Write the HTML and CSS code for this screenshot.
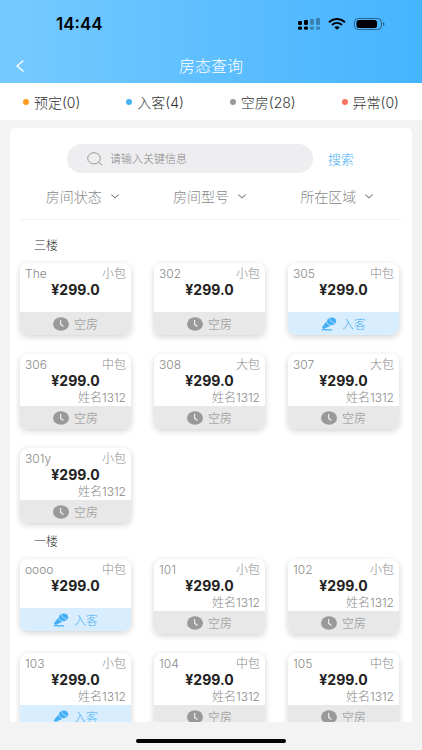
FILE: index.html
```html
<!DOCTYPE html>
<html lang="zh-CN">
<head>
  <meta charset="UTF-8" />
  <meta name="viewport" content="width=device-width, initial-scale=1.0" />
  <title>房态查询</title>
  <link rel="stylesheet" href="styles.css">
</head>
<body>

  <!-- 图标 -->
  <svg class="sprite" aria-hidden="true">
    <symbol id="icon-clock" viewBox="0 0 16 14">
      <ellipse cx="8" cy="7" rx="8" ry="6.7" fill="#999" />
      <path d="M7.6 3.400v4l2.600 1.800" fill="none" stroke="#e8e8e8" stroke-width="1.300" stroke-linecap="round" stroke-linejoin="round" />
    </symbol>
    <symbol id="icon-mic" viewBox="0 0 16 14">
      <ellipse cx="10.600" cy="4.300" rx="4.600" ry="3.900" fill="#42aef5" />
      <path d="M5.300 4.800c.6 2 2 3.200 4.200 3.900L3.600 11.500c-.8.4-1.700.2-2.200-.3-.4-.5-.3-1 .1-1.600z" fill="#42aef5" />
      <path d="M1.200 13c1.600-1.200 2.700-.2 4.300-.2h5.200" fill="none" stroke="#42aef5" stroke-width="1.200" stroke-linecap="round" />
      <path d="M8.200.9c.6 2.700 2.700 4.800 6.200 5.600" fill="none" stroke="#d8edfd" stroke-width=".7" />
    </symbol>
    <symbol id="icon-down" viewBox="0 0 8 5">
      <path d="M.7.9L4 3.900 7.300.9" fill="none" stroke="#888" stroke-width="1.100" stroke-linecap="round" stroke-linejoin="round" />
    </symbol>
  </svg>

  <header class="header">
    <div class="status-bar">
      <span class="time">14:44</span>
      <div class="status-icons">
        <svg width="22" height="12" viewBox="0 0 22 12">
          <rect x="0" y="3" width="4" height="4" rx="1.200" />
          <rect x="6" y="2" width="4" height="5" rx="1.200" />
          <rect x="0" y="8.500" width="4" height="3.200" rx="1.200" />
          <rect x="6" y="8.500" width="4" height="3.200" rx="1.200" />
          <g opacity=".3">
            <rect x="12" y="1" width="4" height="6" rx="1.200" />
            <rect x="18" y="0" width="4" height="7" rx="1.200" />
            <rect x="12" y="8.500" width="4" height="3.200" rx="1.200" />
            <rect x="18" y="8.500" width="4" height="3.200" rx="1.200" />
          </g>
        </svg>
        <svg width="18" height="12" viewBox="0 0 18 12">
          <path d="M1 4.200C5.500-.1 12.500-.1 17 4.200M4 7c2.900-2.600 7.100-2.600 10 0" fill="none" stroke="#000" stroke-width="2" />
          <path d="M6.200 9.200c1.600-1.300 4-1.300 5.600 0L9 11.700z" />
        </svg>
        <svg width="31" height="12" viewBox="0 0 31 12">
          <rect x=".5" y=".5" width="27" height="11" rx="3.800" fill="none" stroke="#000" stroke-opacity=".45" />
          <rect x="2.500" y="2" width="20.500" height="8" rx="2.500" />
          <path d="M29 4.200c2 .5 2 3.100 0 3.600z" opacity=".5" />
        </svg>
      </div>
    </div>
    <div class="nav">
      <button class="btn-back" type="button" aria-label="返回">
        <svg width="8" height="12" viewBox="0 0 8 12">
          <path d="M7 1L1 6l6 5" fill="none" stroke="#fff" stroke-width="1.400" stroke-linecap="round" stroke-linejoin="round" />
        </svg>
      </button>
      <h1 class="title">房态查询</h1>
    </div>
  </header>

  <!-- 状态统计 -->
  <ul class="summary">
    <li class="booked">预定(0)</li>
    <li class="occupied">入客(4)</li>
    <li class="vacant">空房(28)</li>
    <li class="abnormal">异常(0)</li>
  </ul>

  <main class="panel">
    <form class="search">
      <label class="search-box">
        <svg width="16" height="14" viewBox="0 0 16 14">
          <ellipse cx="7" cy="6.300" rx="6.300" ry="5.600" fill="none" stroke="#999" />
          <path d="M11.600 10.200l3.400 2.800" stroke="#999" stroke-linecap="round" />
        </svg>
        <input type="text" name="keyword" placeholder="请输入关键信息" aria-label="关键信息">
      </label>
      <button class="btn-search" type="button">搜索</button>
    </form>

    <div class="filters">
      <label class="filter">
        <select name="status" aria-label="房间状态"><option>房间状态</option></select>
        <svg class="arrow"><use href="#icon-down" /></svg>
      </label>
      <label class="filter">
        <select name="type" aria-label="房间型号"><option>房间型号</option></select>
        <svg class="arrow"><use href="#icon-down" /></svg>
      </label>
      <label class="filter">
        <select name="area" aria-label="所在区域"><option>所在区域</option></select>
        <svg class="arrow"><use href="#icon-down" /></svg>
      </label>
    </div>

    <section class="floor">
      <h2>三楼</h2>
      <div class="rooms">
        <article class="room">
          <div class="room-head"><span>The</span><span>小包</span></div>
          <div class="price">¥299.0</div>
          <div class="state"><svg class="icon"><use href="#icon-clock" /></svg>空房</div>
        </article>
        <article class="room">
          <div class="room-head"><span>302</span><span>小包</span></div>
          <div class="price">¥299.0</div>
          <div class="state"><svg class="icon"><use href="#icon-clock" /></svg>空房</div>
        </article>
        <article class="room">
          <div class="room-head"><span>305</span><span>中包</span></div>
          <div class="price">¥299.0</div>
          <div class="state in-use"><svg class="icon"><use href="#icon-mic" /></svg>入客</div>
        </article>
        <article class="room">
          <div class="room-head"><span>306</span><span>中包</span></div>
          <div class="price">¥299.0</div>
          <div class="guest">姓名1312</div>
          <div class="state"><svg class="icon"><use href="#icon-clock" /></svg>空房</div>
        </article>
        <article class="room">
          <div class="room-head"><span>308</span><span>大包</span></div>
          <div class="price">¥299.0</div>
          <div class="guest">姓名1312</div>
          <div class="state"><svg class="icon"><use href="#icon-clock" /></svg>空房</div>
        </article>
        <article class="room">
          <div class="room-head"><span>307</span><span>大包</span></div>
          <div class="price">¥299.0</div>
          <div class="guest">姓名1312</div>
          <div class="state"><svg class="icon"><use href="#icon-clock" /></svg>空房</div>
        </article>
        <article class="room">
          <div class="room-head"><span>301y</span><span>小包</span></div>
          <div class="price">¥299.0</div>
          <div class="guest">姓名1312</div>
          <div class="state"><svg class="icon"><use href="#icon-clock" /></svg>空房</div>
        </article>
      </div>
    </section>

    <section class="floor">
      <h2>一楼</h2>
      <div class="rooms">
        <article class="room">
          <div class="room-head"><span>oooo</span><span>中包</span></div>
          <div class="price">¥299.0</div>
          <div class="state in-use"><svg class="icon"><use href="#icon-mic" /></svg>入客</div>
        </article>
        <article class="room">
          <div class="room-head"><span>101</span><span>小包</span></div>
          <div class="price">¥299.0</div>
          <div class="guest">姓名1312</div>
          <div class="state"><svg class="icon"><use href="#icon-clock" /></svg>空房</div>
        </article>
        <article class="room">
          <div class="room-head"><span>102</span><span>小包</span></div>
          <div class="price">¥299.0</div>
          <div class="guest">姓名1312</div>
          <div class="state"><svg class="icon"><use href="#icon-clock" /></svg>空房</div>
        </article>
        <article class="room">
          <div class="room-head"><span>103</span><span>小包</span></div>
          <div class="price">¥299.0</div>
          <div class="guest">姓名1312</div>
          <div class="state in-use"><svg class="icon"><use href="#icon-mic" /></svg>入客</div>
        </article>
        <article class="room">
          <div class="room-head"><span>104</span><span>中包</span></div>
          <div class="price">¥299.0</div>
          <div class="guest">姓名1312</div>
          <div class="state"><svg class="icon"><use href="#icon-clock" /></svg>空房</div>
        </article>
        <article class="room">
          <div class="room-head"><span>105</span><span>中包</span></div>
          <div class="price">¥299.0</div>
          <div class="guest">姓名1312</div>
          <div class="state"><svg class="icon"><use href="#icon-clock" /></svg>空房</div>
        </article>
      </div>
    </section>
  </main>

  <footer class="home-bar"><span></span></footer>

</body>
</html>
```

FILE: styles.css
```css
* {
  box-sizing: border-box;
}

body {
  margin: 0;
  height: 100vh;
  display: flex;
  flex-direction: column;
  background: #f3f3f3;
  color: #333;
  font-family: Inter, "Noto Sans CJK SC", sans-serif;
  font-weight: 300;
}

button,
input,
select {
  margin: 0;
  padding: 0;
  border: none;
  outline: none;
  background: none;
  font: inherit;
}

svg {
  display: block;
  flex-shrink: 0;
}

.sprite {
  position: absolute;
  width: 0;
  height: 0;
}

/* 顶部 */
.header {
  flex-shrink: 0;
  background: linear-gradient(to right, #77caff, #45b4ff);
}

.status-bar {
  display: flex;
  justify-content: space-between;
  align-items: center;
  height: 48px;
  padding: 0 37px 0 56px;
}

.time {
  color: #000;
  font-size: 17px;
  font-weight: 600;
}

.status-icons {
  display: flex;
  align-items: center;
  gap: 8px;
}

.nav {
  display: grid;
  grid-template-columns: 40px 1fr 40px;
  align-items: center;
  height: 35px;
}

.btn-back {
  display: flex;
  padding: 8px 16px;
  cursor: pointer;
}

.title {
  margin: 0;
  color: #fff;
  font-size: 16px;
  font-weight: 300;
  line-height: 24px;
  text-align: center;
}

/* 状态统计 */
.summary {
  display: flex;
  flex-shrink: 0;
  justify-content: space-between;
  align-items: center;
  height: 37px;
  margin: 0;
  padding: 0 23px;
  list-style: none;
  background: #fff;
  font-size: 14px;
}

.summary li {
  display: flex;
  align-items: center;
  gap: 5px;
}

.summary li::before {
  content: "";
  width: 6px;
  height: 6px;
  border-radius: 50%;
  background: #999;
}

.summary .booked::before {
  background: #ff9a1e;
}

.summary .occupied::before {
  background: #48b0f5;
}

.summary .abnormal::before {
  background: #f9705f;
}

/* 主体 */
.panel {
  flex: 1;
  min-height: 0;
  overflow: hidden;
  margin: 8px 10px 0;
  padding: 16px 10px 0;
  border-radius: 5px 5px 0 0;
  background: #fff;
}

.search {
  display: flex;
  gap: 15px;
  padding: 0 48px 0 47px;
}

.search-box {
  display: flex;
  flex: 1;
  align-items: center;
  gap: 7px;
  height: 29px;
  padding: 0 20px;
  border-radius: 15px;
  background: #eeeef0;
}

.search-box input {
  flex: 1;
  min-width: 0;
  font-size: 11px;
}

.search-box input::placeholder {
  color: #888;
  opacity: 1;
}

.btn-search {
  color: #48b0f5;
  font-size: 13px;
  cursor: pointer;
}

.filters {
  display: grid;
  grid-template-columns: repeat(3, 1fr);
  height: 47px;
  border-bottom: 1px solid #f3f3f3;
}

.filter {
  display: flex;
  justify-content: center;
  align-items: center;
  gap: 9px;
  padding-right: 3px;
}

.filter select {
  appearance: none;
  color: #888;
  font-size: 14px;
}

.arrow {
  width: 8px;
  height: 5px;
}

.floor h2 {
  margin: 0;
  padding: 2px 14px 0;
  font-size: 12px;
  font-weight: 300;
  line-height: 34px;
}

.floor:first-of-type h2 {
  padding-top: 9px;
}

.rooms {
  display: grid;
  grid-template-columns: repeat(3, 1fr);
  align-items: start;
  gap: 19px 23px;
  padding-right: 3px;
}

.room {
  overflow: hidden;
  border-radius: 8px;
  background: #fff;
  box-shadow: 0 2px 6px rgba(0, 0, 0, 0.18);
  color: #888;
  font-size: 12px;
}

.room-head {
  display: flex;
  justify-content: space-between;
  padding: 3px 5px 0;
  line-height: 16px;
}

.price {
  color: #222;
  font-size: 14px;
  font-weight: 700;
  line-height: 16px;
  text-align: center;
}

.guest {
  padding: 0 5px;
  line-height: 17px;
  text-align: right;
}

.state {
  display: flex;
  justify-content: center;
  align-items: center;
  gap: 5px;
  height: 23px;
  background: #e8e8e8;
}

/* 没有客人姓名时留白 */
.price + .state {
  margin-top: 14px;
}

.state.in-use {
  background: #d8edfd;
  color: #48b0f5;
}

.icon {
  width: 16px;
  height: 14px;
}

/* 底部横条 */
.home-bar {
  display: flex;
  flex-shrink: 0;
  justify-content: center;
  height: 28px;
  padding-top: 17px;
}

.home-bar span {
  width: 150px;
  height: 4px;
  border-radius: 2px;
  background: #000;
}
```
